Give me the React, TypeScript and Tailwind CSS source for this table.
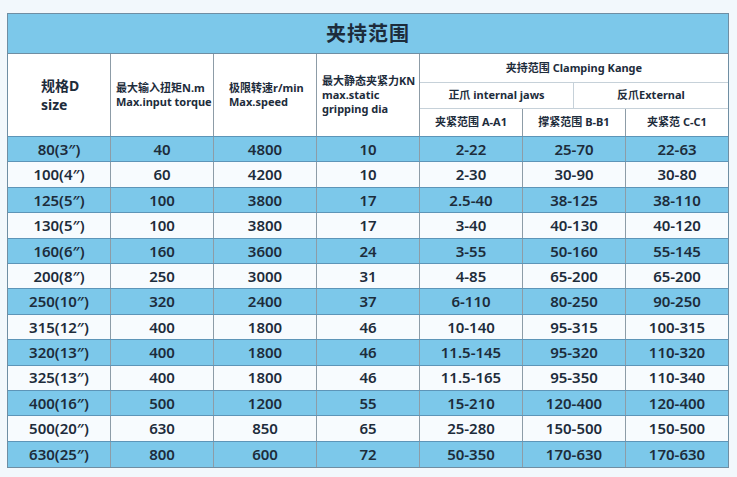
const rows = [
  ["80(3″)", "40", "4800", "10", "2-22", "25-70", "22-63"],
  ["100(4″)", "60", "4200", "10", "2-30", "30-90", "30-80"],
  ["125(5″)", "100", "3800", "17", "2.5-40", "38-125", "38-110"],
  ["130(5″)", "100", "3800", "17", "3-40", "40-130", "40-120"],
  ["160(6″)", "160", "3600", "24", "3-55", "50-160", "55-145"],
  ["200(8″)", "250", "3000", "31", "4-85", "65-200", "65-200"],
  ["250(10″)", "320", "2400", "37", "6-110", "80-250", "90-250"],
  ["315(12″)", "400", "1800", "46", "10-140", "95-315", "100-315"],
  ["320(13″)", "400", "1800", "46", "11.5-145", "95-320", "110-320"],
  ["325(13″)", "400", "1800", "46", "11.5-165", "95-350", "110-340"],
  ["400(16″)", "500", "1200", "55", "15-210", "120-400", "120-400"],
  ["500(20″)", "630", "850", "65", "25-280", "150-500", "150-500"],
  ["630(25″)", "800", "600", "72", "50-350", "170-630", "170-630"],
];

const App = () => {
  return (
    <div
      className="min-h-screen w-[737px] h-[477px] bg-[#f2f8fc] pt-[13px] pl-[7px] text-[#1d2c3b]"
      style={{ fontFamily: '"Noto Sans", "Noto Sans CJK SC", sans-serif' }}
    >
      <div className="w-[722px] border border-[#6f8ea3]">
        {/* 标题 */}
        <div className="h-[40px] bg-[#7cc8ea] border-b border-[#6f8ea3] flex items-center justify-center text-[20px] font-bold tracking-[1px]">
          夹持范围
        </div>

        {/* 表头 */}
        <div className="flex h-[83px] bg-white border-b border-[#5d95b8]">
          <div className="w-[103px] border-r border-[#8d9ca7] flex flex-col justify-center pl-[33px] text-[14px] font-bold leading-[19px]">
            <span>规格D</span>
            <span>size</span>
          </div>
          <div className="w-[103px] border-r border-[#8d9ca7] flex flex-col justify-center pl-[5px] text-[11px] font-bold leading-[14px] whitespace-nowrap">
            <span>最大输入扭矩N.m</span>
            <span>Max.input torque</span>
          </div>
          <div className="w-[103px] border-r border-[#8d9ca7] flex flex-col justify-center pl-[15px] text-[11px] font-bold leading-[14px] whitespace-nowrap">
            <span>极限转速r/min</span>
            <span>Max.speed</span>
          </div>
          <div className="w-[103px] border-r border-[#8d9ca7] flex flex-col justify-center pl-[5px] text-[11px] font-bold leading-[14px] whitespace-nowrap">
            <span>最大静态夹紧力KN</span>
            <span>max.static</span>
            <span>gripping dia</span>
          </div>
          <div className="flex-1 flex flex-col text-[11px] font-bold">
            <div className="h-[29px] border-b border-[#c6d1d9] flex items-center justify-center">
              夹持范围 Clamping Kange
            </div>
            <div className="h-[26px] border-b border-[#c6d1d9] flex">
              <div className="w-[154px] border-r border-[#c6d1d9] flex items-center justify-center">
                正爪 internal jaws
              </div>
              <div className="flex-1 flex items-center justify-center">
                反爪External
              </div>
            </div>
            <div className="flex-1 flex">
              <div className="w-[103px] border-r border-[#8d9ca7] flex items-center justify-center">
                夹紧范围 A-A1
              </div>
              <div className="w-[103px] border-r border-[#8d9ca7] flex items-center justify-center">
                撑紧范围 B-B1
              </div>
              <div className="flex-1 flex items-center justify-center">
                夹紧范 C-C1
              </div>
            </div>
          </div>
        </div>

        {/* 数据 */}
        {rows.map((row, i) => (
          <div
            key={row[0]}
            className={
              i % 2 === 0
                ? "flex h-[25.4px] bg-[#7cc8ea] border-b border-[#5d95b8] last:border-b-0"
                : "flex h-[25.4px] bg-[#f7fbfe] border-b border-[#5d95b8]"
            }
          >
            {row.map((cell, j) => (
              <div
                key={j}
                className={
                  j < 6
                    ? "w-[103px] border-r border-[#8d9ca7] flex items-center justify-center text-[15px] font-semibold"
                    : "flex-1 flex items-center justify-center text-[15px] font-semibold"
                }
              >
                {cell}
              </div>
            ))}
          </div>
        ))}
      </div>
    </div>
  );
};

export default App;
